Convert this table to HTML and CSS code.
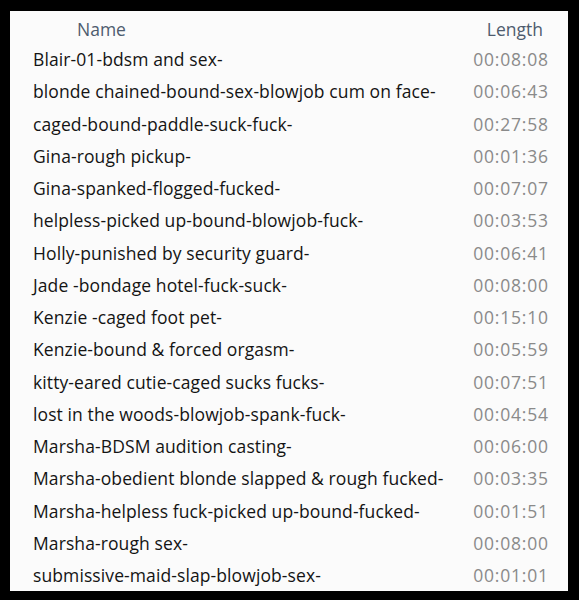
FILE: index.html
```html
<!DOCTYPE html>
<html>
<head>
<meta charset="utf-8">
<link rel="stylesheet" href="styles.css">
</head>
<body>
<div class="panel">
  <div class="row head">
    <div class="name-h">Name</div>
    <div class="len-h">Length</div>
  </div>
  <div class="row"><div class="name">Blair-01-bdsm and sex-</div><div class="len">00:08:08</div></div>
  <div class="row"><div class="name">blonde chained-bound-sex-blowjob cum on face-</div><div class="len">00:06:43</div></div>
  <div class="row"><div class="name">caged-bound-paddle-suck-fuck-</div><div class="len">00:27:58</div></div>
  <div class="row"><div class="name">Gina-rough pickup-</div><div class="len">00:01:36</div></div>
  <div class="row"><div class="name">Gina-spanked-flogged-fucked-</div><div class="len">00:07:07</div></div>
  <div class="row"><div class="name">helpless-picked up-bound-blowjob-fuck-</div><div class="len">00:03:53</div></div>
  <div class="row"><div class="name">Holly-punished by security guard-</div><div class="len">00:06:41</div></div>
  <div class="row"><div class="name">Jade -bondage hotel-fuck-suck-</div><div class="len">00:08:00</div></div>
  <div class="row"><div class="name">Kenzie -caged foot pet-</div><div class="len">00:15:10</div></div>
  <div class="row"><div class="name">Kenzie-bound &amp; forced orgasm-</div><div class="len">00:05:59</div></div>
  <div class="row"><div class="name">kitty-eared cutie-caged sucks fucks-</div><div class="len">00:07:51</div></div>
  <div class="row"><div class="name">lost in the woods-blowjob-spank-fuck-</div><div class="len">00:04:54</div></div>
  <div class="row"><div class="name">Marsha-BDSM audition casting-</div><div class="len">00:06:00</div></div>
  <div class="row"><div class="name">Marsha-obedient blonde slapped &amp; rough fucked-</div><div class="len">00:03:35</div></div>
  <div class="row"><div class="name">Marsha-helpless fuck-picked up-bound-fucked-</div><div class="len">00:01:51</div></div>
  <div class="row"><div class="name">Marsha-rough sex-</div><div class="len">00:08:00</div></div>
  <div class="row"><div class="name">submissive-maid-slap-blowjob-sex-</div><div class="len">00:01:01</div></div>
</div>
</body>
</html>
```
FILE: styles.css
```css
html, body {
  margin: 0;
  padding: 0;
  background: #000;
}
body {
  padding: 11px 11px 9px 10px;
  height: 600px;
  box-sizing: border-box;
}
.panel {
  background: #fbfbfb;
  height: 100%;
  box-sizing: border-box;
  font-family: "Open Sans", "Noto Sans", sans-serif;
  font-size: 17.5px;
  padding-top: 4px;
}
.row {
  display: flex;
  justify-content: space-between;
  align-items: center;
  height: 32.25px;
  padding: 0 20px 0 23px;
}
.row.head {
  height: 28px;
}
.name {
  color: #141414;
  white-space: nowrap;
  letter-spacing: 0.1px;
}
.len {
  color: #8a8a8a;
  letter-spacing: 0.8px;
  margin-right: -0.8px;
}
.name-h {
  color: #4e5b6e;
  padding-left: 44px;
}
.len-h {
  color: #4e5b6e;
  padding-right: 5px;
}
```
